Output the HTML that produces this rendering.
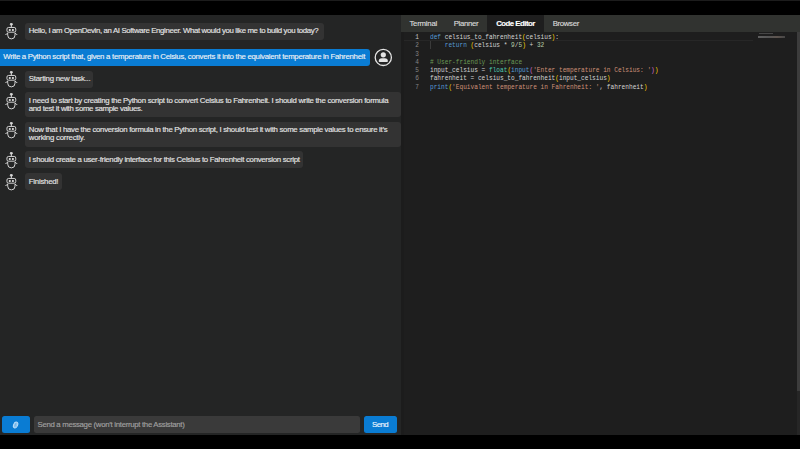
<!DOCTYPE html>
<html><head><meta charset="utf-8">
<style>
*{box-sizing:border-box;margin:0;padding:0}
html,body{width:800px;height:449px;overflow:hidden;background:#000}
body{position:relative;font-family:"Liberation Sans",sans-serif;}
.abs{position:absolute}
#topline{left:0;top:0;width:800px;height:1px;background:#1c1c1c}
#left{left:0;top:15px;width:400.5px;height:420px;background:#242525;overflow:hidden}
#divider{left:400.5px;top:15px;width:3.3px;height:420px;background:#1b1b1b;border-left:1px solid #282828}
#right{left:400.5px;top:15px;width:399.5px;height:420px;background:#1e1e1e;overflow:hidden}
.bub{position:absolute;background:#333333;border-radius:3px;color:#e4e4e4;-webkit-text-stroke:0.15px #e4e4e4;font-size:7.8px;line-height:8.3px;white-space:nowrap;display:flex;align-items:center;padding-left:3.8px}
.bt{white-space:nowrap}
.txt{position:absolute;white-space:nowrap;font-size:7.8px}
.bot{position:absolute}
#tabs{left:0.2px;top:0;width:400px;height:17px;background:#313330}
.tab{position:absolute;top:0;height:17px;color:#d8d8d8;font-size:7.8px;line-height:17px;-webkit-text-stroke:0.15px currentColor}
.code{position:absolute;font-family:"Liberation Mono",monospace;font-size:7px;line-height:8.25px;white-space:pre;color:#d4d4d4;transform:scaleX(0.877);transform-origin:0 0}
.ln{position:absolute;font-family:"Liberation Mono",monospace;font-size:7px;line-height:8.25px;color:#858585;text-align:right;width:20px;transform:scaleX(0.871);transform-origin:100% 0}
.kw{color:#569cd6}.y{color:#ffd700}.p{color:#da70d6}.b{color:#179fff}.s{color:#ce9178}.c{color:#6a9955}.n{color:#b5cea8}.t{color:#4ec9b0}
</style></head><body>
<div class="abs" id="topline"></div>
<div class="abs" id="left">
<svg class="bot" style="left:4px;top:8.2px" width="14" height="17" viewBox="0 0 14 17"><g fill="none" stroke="#dcdcdc" stroke-width="0.95">
      <circle cx="7.35" cy="1.3" r="1.05" fill="#d8d8d8"/>
      <line x1="7.35" y1="2.2" x2="7.35" y2="4.2"/>
      <rect x="2.95" y="4.45" width="8.8" height="4.75" rx="1.6"/>
      <circle cx="5.8" cy="7.0" r="1.1" fill="#e6e6e6" stroke="none"/>
      <circle cx="8.9" cy="7.0" r="1.1" fill="#e6e6e6" stroke="none"/>
      <path d="M3.7 9.8 L3.7 12.2 A3.65 3.7 0 0 0 11 12.2 L11 9.8"/>
      <path d="M1.5 12 Q2.4 10.6 3.7 10.3 M13.2 12 Q12.3 10.6 11 10.3"/>
    </g>
</svg>
<div class="bub" style="left:25px;top:7.699999999999999px;width:298.5px;height:17px;"><div class="bt" style="letter-spacing:-0.347px;position:relative;top:0.25px">Hello, I am OpenDevin, an AI Software Engineer. What would you like me to build you today?</div></div>
<div class="bub" style="left:-3px;top:33.6px;width:373px;height:17.6px;background:#0a7cd3;color:#f0f8ff;padding-left:6.3px"><div class="bt" style="letter-spacing:-0.274px;position:relative;top:-0.1px">Write a Python script that, given a temperature in Celsius, converts it into the equivalent temperature in Fahrenheit</div></div>
<svg class="bot" style="left:4px;top:56.2px" width="14" height="17" viewBox="0 0 14 17"><g fill="none" stroke="#dcdcdc" stroke-width="0.95">
      <circle cx="7.35" cy="1.3" r="1.05" fill="#d8d8d8"/>
      <line x1="7.35" y1="2.2" x2="7.35" y2="4.2"/>
      <rect x="2.95" y="4.45" width="8.8" height="4.75" rx="1.6"/>
      <circle cx="5.8" cy="7.0" r="1.1" fill="#e6e6e6" stroke="none"/>
      <circle cx="8.9" cy="7.0" r="1.1" fill="#e6e6e6" stroke="none"/>
      <path d="M3.7 9.8 L3.7 12.2 A3.65 3.7 0 0 0 11 12.2 L11 9.8"/>
      <path d="M1.5 12 Q2.4 10.6 3.7 10.3 M13.2 12 Q12.3 10.6 11 10.3"/>
    </g>
</svg>
<div class="bub" style="left:25px;top:55.7px;width:68px;height:17px;"><div class="bt" style="letter-spacing:-0.232px;position:relative;top:0.25px">Starting new task...</div></div>
<svg class="bot" style="left:4px;top:77.7px" width="14" height="17" viewBox="0 0 14 17"><g fill="none" stroke="#dcdcdc" stroke-width="0.95">
      <circle cx="7.35" cy="1.3" r="1.05" fill="#d8d8d8"/>
      <line x1="7.35" y1="2.2" x2="7.35" y2="4.2"/>
      <rect x="2.95" y="4.45" width="8.8" height="4.75" rx="1.6"/>
      <circle cx="5.8" cy="7.0" r="1.1" fill="#e6e6e6" stroke="none"/>
      <circle cx="8.9" cy="7.0" r="1.1" fill="#e6e6e6" stroke="none"/>
      <path d="M3.7 9.8 L3.7 12.2 A3.65 3.7 0 0 0 11 12.2 L11 9.8"/>
      <path d="M1.5 12 Q2.4 10.6 3.7 10.3 M13.2 12 Q12.3 10.6 11 10.3"/>
    </g>
</svg>
<div class="bub" style="left:25px;top:77.2px;width:376px;height:25.3px;"><div class="bt" style="letter-spacing:-0.276px;position:relative;top:0.25px">I need to start by creating the Python script to convert Celsius to Fahrenheit. I should write the conversion formula<br><span style="letter-spacing:-0.323px">and test it with some sample values.</span></div></div>
<svg class="bot" style="left:4px;top:107.2px" width="14" height="17" viewBox="0 0 14 17"><g fill="none" stroke="#dcdcdc" stroke-width="0.95">
      <circle cx="7.35" cy="1.3" r="1.05" fill="#d8d8d8"/>
      <line x1="7.35" y1="2.2" x2="7.35" y2="4.2"/>
      <rect x="2.95" y="4.45" width="8.8" height="4.75" rx="1.6"/>
      <circle cx="5.8" cy="7.0" r="1.1" fill="#e6e6e6" stroke="none"/>
      <circle cx="8.9" cy="7.0" r="1.1" fill="#e6e6e6" stroke="none"/>
      <path d="M3.7 9.8 L3.7 12.2 A3.65 3.7 0 0 0 11 12.2 L11 9.8"/>
      <path d="M1.5 12 Q2.4 10.6 3.7 10.3 M13.2 12 Q12.3 10.6 11 10.3"/>
    </g>
</svg>
<div class="bub" style="left:25px;top:106.7px;width:376px;height:25.1px;"><div class="bt" style="letter-spacing:-0.285px;position:relative;top:0.25px">Now that I have the conversion formula in the Python script, I should test it with some sample values to ensure it’s<br><span style="letter-spacing:-0.224px">working correctly.</span></div></div>
<svg class="bot" style="left:4px;top:136.6px" width="14" height="17" viewBox="0 0 14 17"><g fill="none" stroke="#dcdcdc" stroke-width="0.95">
      <circle cx="7.35" cy="1.3" r="1.05" fill="#d8d8d8"/>
      <line x1="7.35" y1="2.2" x2="7.35" y2="4.2"/>
      <rect x="2.95" y="4.45" width="8.8" height="4.75" rx="1.6"/>
      <circle cx="5.8" cy="7.0" r="1.1" fill="#e6e6e6" stroke="none"/>
      <circle cx="8.9" cy="7.0" r="1.1" fill="#e6e6e6" stroke="none"/>
      <path d="M3.7 9.8 L3.7 12.2 A3.65 3.7 0 0 0 11 12.2 L11 9.8"/>
      <path d="M1.5 12 Q2.4 10.6 3.7 10.3 M13.2 12 Q12.3 10.6 11 10.3"/>
    </g>
</svg>
<div class="bub" style="left:25px;top:136.1px;width:278px;height:17.1px;"><div class="bt" style="letter-spacing:-0.29px;position:relative;top:0.25px">I should create a user-friendly interface for this Celsius to Fahrenheit conversion script</div></div>
<svg class="bot" style="left:4px;top:158.7px" width="14" height="17" viewBox="0 0 14 17"><g fill="none" stroke="#dcdcdc" stroke-width="0.95">
      <circle cx="7.35" cy="1.3" r="1.05" fill="#d8d8d8"/>
      <line x1="7.35" y1="2.2" x2="7.35" y2="4.2"/>
      <rect x="2.95" y="4.45" width="8.8" height="4.75" rx="1.6"/>
      <circle cx="5.8" cy="7.0" r="1.1" fill="#e6e6e6" stroke="none"/>
      <circle cx="8.9" cy="7.0" r="1.1" fill="#e6e6e6" stroke="none"/>
      <path d="M3.7 9.8 L3.7 12.2 A3.65 3.7 0 0 0 11 12.2 L11 9.8"/>
      <path d="M1.5 12 Q2.4 10.6 3.7 10.3 M13.2 12 Q12.3 10.6 11 10.3"/>
    </g>
</svg>
<div class="bub" style="left:25px;top:158.2px;width:36.5px;height:16.8px;"><div class="bt" style="letter-spacing:-0.237px;position:relative;top:0.25px">Finished!</div></div>

  <svg class="abs" style="left:374px;top:33px" width="19" height="19" viewBox="0 0 19 19">
    <circle cx="9.3" cy="9.4" r="8.1" fill="none" stroke="#e4e4e4" stroke-width="1.3"/>
    <circle cx="9.3" cy="6.8" r="2.6" fill="#e4e4e4"/>
    <path d="M4.7 13.2 Q4.7 10.3 7.8 10.2 L10.8 10.2 Q13.9 10.3 13.9 13.2 Q13.9 13.9 13.1 13.9 L5.5 13.9 Q4.7 13.9 4.7 13.2Z" fill="#e4e4e4"/>
  </svg>
  <!-- input area -->
  <div class="abs" style="left:2px;top:401.3px;width:27.6px;height:16.6px;background:#0a7cd3;border-radius:2.5px"></div>
  <svg class="abs" style="left:11px;top:404.5px" width="9" height="10" viewBox="0 0 9 10"><ellipse cx="4.6" cy="5" rx="2" ry="3.1" transform="rotate(25 4.6 5)" fill="#8fc6f0" stroke="#bfe0fa" stroke-width="0.9"/><path d="M4.8 3.2 L3.9 6.4" stroke="#5aa7e0" stroke-width="0.6"/></svg>
  <div class="abs" style="left:34.3px;top:401.3px;width:325.6px;height:16.6px;background:#3a3a3a;border-radius:2.5px"></div>
  <div class="txt" style="left:37.5px;top:405.2px;letter-spacing:-0.31px;line-height:10px;color:#a0a0a0;-webkit-text-stroke:0.15px #a0a0a0">Send a message (won’t interrupt the Assistant)</div>
  <div class="abs" style="left:364px;top:401.3px;width:33px;height:16.7px;background:#0a7cd3;border-radius:2.5px"></div>
  <div class="txt" style="left:372px;top:405.2px;letter-spacing:-0.5px;line-height:10px;color:#eef6ff;-webkit-text-stroke:0.15px #eef6ff">Send</div>
</div>
<div class="abs" id="right">
  <div class="abs" style="left:0;top:17px;width:3px;height:403px;background:#1c1c1c"></div>
  <div class="abs" id="tabs">
    <div class="tab" style="left:8.7px;letter-spacing:-0.214px">Terminal</div>
    <div class="tab" style="left:53px;letter-spacing:-0.333px">Planner</div>
    <div class="abs" style="left:86.8px;top:0;width:56.5px;height:17px;background:#1e1e1e"></div>
    <div class="tab" style="left:95.5px;color:#fff;font-weight:bold;letter-spacing:-0.5px">Code Editor</div>
    <div class="tab" style="left:152px;letter-spacing:-0.333px">Browser</div>
  </div>
  <!-- current line border -->
  <div class="abs" style="left:3.3px;top:17.5px;width:349px;height:8.6px;border-bottom:1px solid #272727"></div>
  <div class="ln" style="left:-1.2px;top:18.10px;color:#c6c6c6">1</div>
  <div class="ln" style="left:-1.2px;top:26.35px">2</div>
  <div class="ln" style="left:-1.2px;top:34.60px">3</div>
  <div class="ln" style="left:-1.2px;top:42.85px">4</div>
  <div class="ln" style="left:-1.2px;top:51.10px">5</div>
  <div class="ln" style="left:-1.2px;top:59.35px">6</div>
  <div class="ln" style="left:-1.2px;top:67.60px">7</div>
  <div class="abs" style="left:29.5px;top:25.6px;width:1px;height:8px;background:#3a3a3a"></div>
  <div class="code" style="left:29.2px;top:18.1px"><span class="kw">def</span> celsius_to_fahrenheit<span class="y">(</span>celsius<span class="y">)</span>:
    <span class="kw">return</span> <span class="y">(</span>celsius * <span class="n">9</span>/<span class="n">5</span><span class="y">)</span> + <span class="n">32</span>

<span class="c"># User-friendly interface</span>
input_celsius = <span class="t">float</span><span class="y">(</span><span class="kw">input</span><span class="p">(</span><span class="s">'Enter temperature in Celsius: '</span><span class="p">)</span><span class="y">)</span>
fahrenheit = celsius_to_fahrenheit<span class="y">(</span>input_celsius<span class="y">)</span>
<span class="kw">print</span><span class="y">(</span><span class="s">'Equivalent temperature in Fahrenheit: '</span>, fahrenheit<span class="y">)</span></div>
  <!-- minimap -->
  <div class="abs" style="left:358.5px;top:17.8px;width:14px;height:0.8px;background:#777;opacity:.45"></div>
  <div class="abs" style="left:357.5px;top:21.4px;width:27px;height:1.8px;background:linear-gradient(90deg,#8a8a8a,#7a7a7a 40%,#8a7a70 70%,#606060);opacity:.6"></div>
  <!-- scrollbar -->
  <div class="abs" style="left:396px;top:17px;width:3.5px;height:359px;background:#3c3c3c"></div>
  <div class="abs" style="left:396px;top:376px;width:3.5px;height:44px;background:#262626"></div>
</div>

</body></html>
